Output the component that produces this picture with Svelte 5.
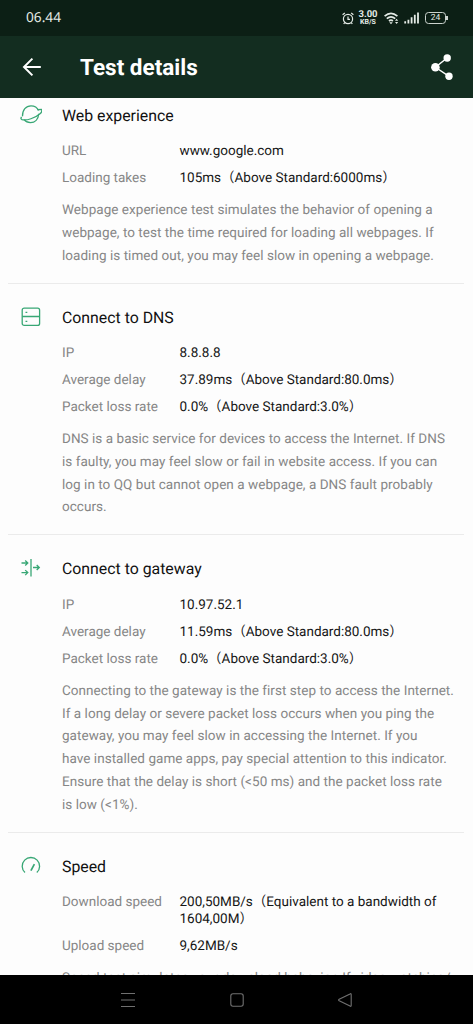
<script>
	const sections = [
		{
			icon: "planet",
			title: "Web experience",
			rows: [
				["URL", "www.google.com"],
				["Loading takes", "105ms（Above Standard:6000ms）"],
			],
			text: [
				"Webpage experience test simulates the behavior of opening a",
				"webpage, to test the time required for loading all webpages. If",
				"loading is timed out, you may feel slow in opening a webpage.",
			],
		},
		{
			icon: "server",
			title: "Connect to DNS",
			rows: [
				["IP", "8.8.8.8"],
				["Average delay", "37.89ms（Above Standard:80.0ms）"],
				["Packet loss rate", "0.0%（Above Standard:3.0%）"],
			],
			text: [
				"DNS is a basic service for devices to access the Internet. If DNS",
				"is faulty, you may feel slow or fail in website access. If you can",
				"log in to QQ but cannot open a webpage, a DNS fault probably",
				"occurs.",
			],
		},
		{
			icon: "gateway",
			title: "Connect to gateway",
			rows: [
				["IP", "10.97.52.1"],
				["Average delay", "11.59ms（Above Standard:80.0ms）"],
				["Packet loss rate", "0.0%（Above Standard:3.0%）"],
			],
			text: [
				"Connecting to the gateway is the first step to access the Internet.",
				"If a long delay or severe packet loss occurs when you ping the",
				"gateway, you may feel slow in accessing the Internet. If you",
				"have installed game apps, pay special attention to this indicator.",
				"Ensure that the delay is short (<50 ms) and the packet loss rate",
				"is low (<1%).",
			],
		},
		{
			icon: "gauge",
			title: "Speed",
			rows: [
				["Download speed", "200,50MB/s（Equivalent to a bandwidth of\n1604,00M）"],
				["Upload speed", "9,62MB/s"],
			],
			text: ["Speed test simulates your download behavior. If video watching/"],
		},
	];
</script>

<div class="screen">
	<div class="status-bar">
		<span class="clock">06.44</span>
		<div class="status-icons">
			<svg class="alarm" width="12" height="13" viewBox="0 0 12 13">
				<circle cx="6" cy="7" r="4.6" />
				<path d="M6 4.5V7.3H8M.6 2.8 2.8 1M11.4 2.8 9.2 1M2.7 10.7 1.7 12M9.3 10.7l1 1.3" />
			</svg>
			<div class="rate">
				<span class="rate-value">3.00</span>
				<span class="rate-unit">KB/S</span>
			</div>
			<svg class="wifi" width="16" height="13" viewBox="0 0 16 13">
				<path d="M.6 4.2Q7 -1.6 13.4 4.2M2.8 6.7Q7 3 11.2 6.7M5 9Q7 7.3 8.9 9" />
				<path class="solid" d="M5.3 10.2h3.4L7 12.2zM11 8.8l1.6-2 1.6 2zM11 9.9h3.2l-1.6 2z" />
			</svg>
			<svg class="signal" width="15" height="12" viewBox="0 0 15 12">
				<path d="M1.2 11.5V9.3M4.4 11.5V7.7M7.6 11.5V5.3M10.8 11.5V2.8M14 11.5V.5" />
			</svg>
			<div class="battery">24</div>
		</div>
	</div>

	<header class="app-bar">
		<svg class="back" width="20" height="20" viewBox="0 0 20 20">
			<path d="M18.8 10H2M10.4 1.6 2 10l8.4 8.4" />
		</svg>
		<h1>Test details</h1>
		<svg class="share" width="24" height="28" viewBox="0 0 24 28">
			<path d="M17 5 5.5 14.3 19 23.3" />
			<circle cx="17.2" cy="5" r="3.7" />
			<circle cx="5.4" cy="14.3" r="4.3" />
			<circle cx="19" cy="23.3" r="3.7" />
		</svg>
	</header>

	<main class="content">
		{#each sections as section}
			<section>
				<div class="icon">
					<svg width="22" height="22" viewBox="0 0 22 22">
						{#if section.icon === "planet"}
							<path d="M2.5 12.4C2.2 5.7 6.1 1.8 11 1.8c3.5 0 6.3 1.8 7.6 4.8M18.8 9.8c-.5 5.6-3.9 8.9-8.3 8.9-2.6 0-4.9-1.1-6.3-3" />
							<path d="M17.2 5.7l4.2-.3c.9 1.3.2 2.9-1.4 4.3-4.6 4.2-13.6 7.3-18 5.9-1.1-.5-1.4-1.3-.5-2.8" />
						{:else if section.icon === "server"}
							<rect x="2.2" y="2.2" width="17.4" height="17.2" rx="2" />
							<path d="M2.2 10.5h17.4M5.5 6.3h1.8M5.5 15.3h1.8" />
						{:else if section.icon === "gateway"}
							<path d="M11 2v17.5M1.5 6h6M5.2 3.5 7.8 6 5.2 8.5M1.5 15.6h6M5.2 13.1l2.6 2.5-2.6 2.5M13 10.5h6M16.7 8l2.6 2.5-2.6 2.5" />
						{:else}
							<path d="M5 17.6A8.7 8.7 0 1 1 16.8 17.6" />
							<path class="needle" d="M10.9 15.7 14.4 9.2" />
						{/if}
					</svg>
				</div>
				<div class="body">
					<h2>{section.title}</h2>
					<dl>
						{#each section.rows as [label, value]}
							<div class="row">
								<dt>{label}</dt>
								<dd>{value}</dd>
							</div>
						{/each}
					</dl>
					<p>{section.text.join("\n")}</p>
				</div>
			</section>
		{/each}
	</main>

	<nav>
		<svg width="16" height="16" viewBox="0 0 16 16">
			<path d="M1 1.5h14M1 8h14M1 14.5h14" />
		</svg>
		<svg width="16" height="16" viewBox="0 0 16 16">
			<rect x="1.8" y="1.8" width="12.4" height="12.4" rx="2.2" />
		</svg>
		<svg width="16" height="16" viewBox="0 0 16 16">
			<path d="M14.2 2.6v10.8q0 1.4-1.2.7L2.2 8.7q-1.2-.7 0-1.4L13 1.9q1.2-.7 1.2.7z" />
		</svg>
	</nav>
</div>

<style>
	:global(body) {
		margin: 0;
		background: #fdfdfd;
	}
	.screen {
		display: flex;
		flex-direction: column;
		width: 473px;
		height: 1024px;
		overflow: hidden;
		font-family: Roboto, "Noto Sans CJK SC", sans-serif;
		text-rendering: geometricPrecision;
	}
	svg {
		display: block;
		fill: none;
	}

	.status-bar {
		display: flex;
		flex: none;
		align-items: center;
		justify-content: space-between;
		box-sizing: border-box;
		height: 36px;
		padding: 0 26px;
		background: #0c1f15;
		color: #e4ebe6;
	}
	.clock {
		font-family: "Noto Sans", sans-serif;
		font-size: 13.7px;
		line-height: 16px;
	}
	.status-icons {
		display: flex;
		align-items: center;
	}
	.status-icons svg {
		stroke: #e4ebe6;
		stroke-width: 1.2;
	}
	.rate {
		display: flex;
		flex-direction: column;
		align-items: center;
		width: 20px;
		margin: 0 6px 0 4px;
		font-weight: 700;
	}
	.rate-value {
		font-size: 9.5px;
		line-height: 8px;
	}
	.rate-unit {
		font-size: 7px;
		line-height: 7px;
	}
	.wifi .solid {
		fill: #e4ebe6;
		stroke: none;
	}
	.status-icons .wifi {
		stroke-width: 1.7;
	}
	.status-icons .signal {
		margin: 0 6px 0 4px;
		stroke-width: 1.8;
	}
	.battery {
		position: relative;
		box-sizing: border-box;
		width: 21px;
		height: 12px;
		margin-right: 1px;
		border: 1px solid #cbd3ce;
		border-radius: 3.5px;
		font-size: 8.5px;
		line-height: 10px;
		text-align: center;
	}
	.battery::after {
		content: "";
		position: absolute;
		top: 3px;
		right: -3px;
		width: 2px;
		height: 4px;
		background: #cbd3ce;
	}

	.app-bar {
		display: flex;
		flex: none;
		align-items: center;
		box-sizing: border-box;
		height: 62px;
		padding: 0 19.5px 0 21.5px;
		background: #132d20;
		color: #fff;
	}
	.back {
		stroke: #fff;
		stroke-width: 2;
	}
	h1 {
		flex: 1;
		margin: 2px 0 0 38.5px;
		font-size: 22.5px;
		font-weight: 700;
	}
	.share {
		stroke: #fff;
		stroke-width: 1.4;
	}
	.share circle {
		fill: #fff;
		stroke: none;
	}

	.content {
		flex: 1;
		min-height: 0;
		overflow: hidden;
		background: #fdfdfd;
	}
	section {
		display: flex;
		margin: 0 9px 0 8px;
		padding: 22px 0 15.3px 12px;
		border-bottom: 1px solid #ebebeb;
	}
	section:first-child {
		margin-top: -16px;
	}
	.icon {
		flex: none;
		width: 42px;
	}
	.icon svg {
		stroke: #38a775;
		stroke-width: 1.3;
	}
	.icon .needle {
		stroke-width: 1.7;
	}
	.body {
		flex: 1;
	}
	h2 {
		margin: 0 0 15.2px;
		font-size: 15.85px;
		font-weight: 400;
		line-height: 24px;
		color: #111;
	}
	dl {
		display: flex;
		flex-direction: column;
		gap: 9.7px;
		margin: 0;
	}
	.row {
		display: flex;
		font-size: 13.5px;
		line-height: 17.5px;
	}
	dt {
		width: 117.5px;
		color: #868686;
	}
	dd {
		margin: 0;
		color: #151515;
		white-space: pre;
	}
	p {
		margin: 11.5px 0 0;
		font-size: 13.5px;
		line-height: 22.7px;
		letter-spacing: 0.04px;
		color: #868686;
		white-space: pre;
	}

	nav {
		display: flex;
		flex: none;
		align-items: center;
		justify-content: center;
		gap: 92.5px;
		height: 49px;
		background: #000;
	}
	nav svg {
		stroke: #707070;
		stroke-width: 1.1;
	}
</style>
